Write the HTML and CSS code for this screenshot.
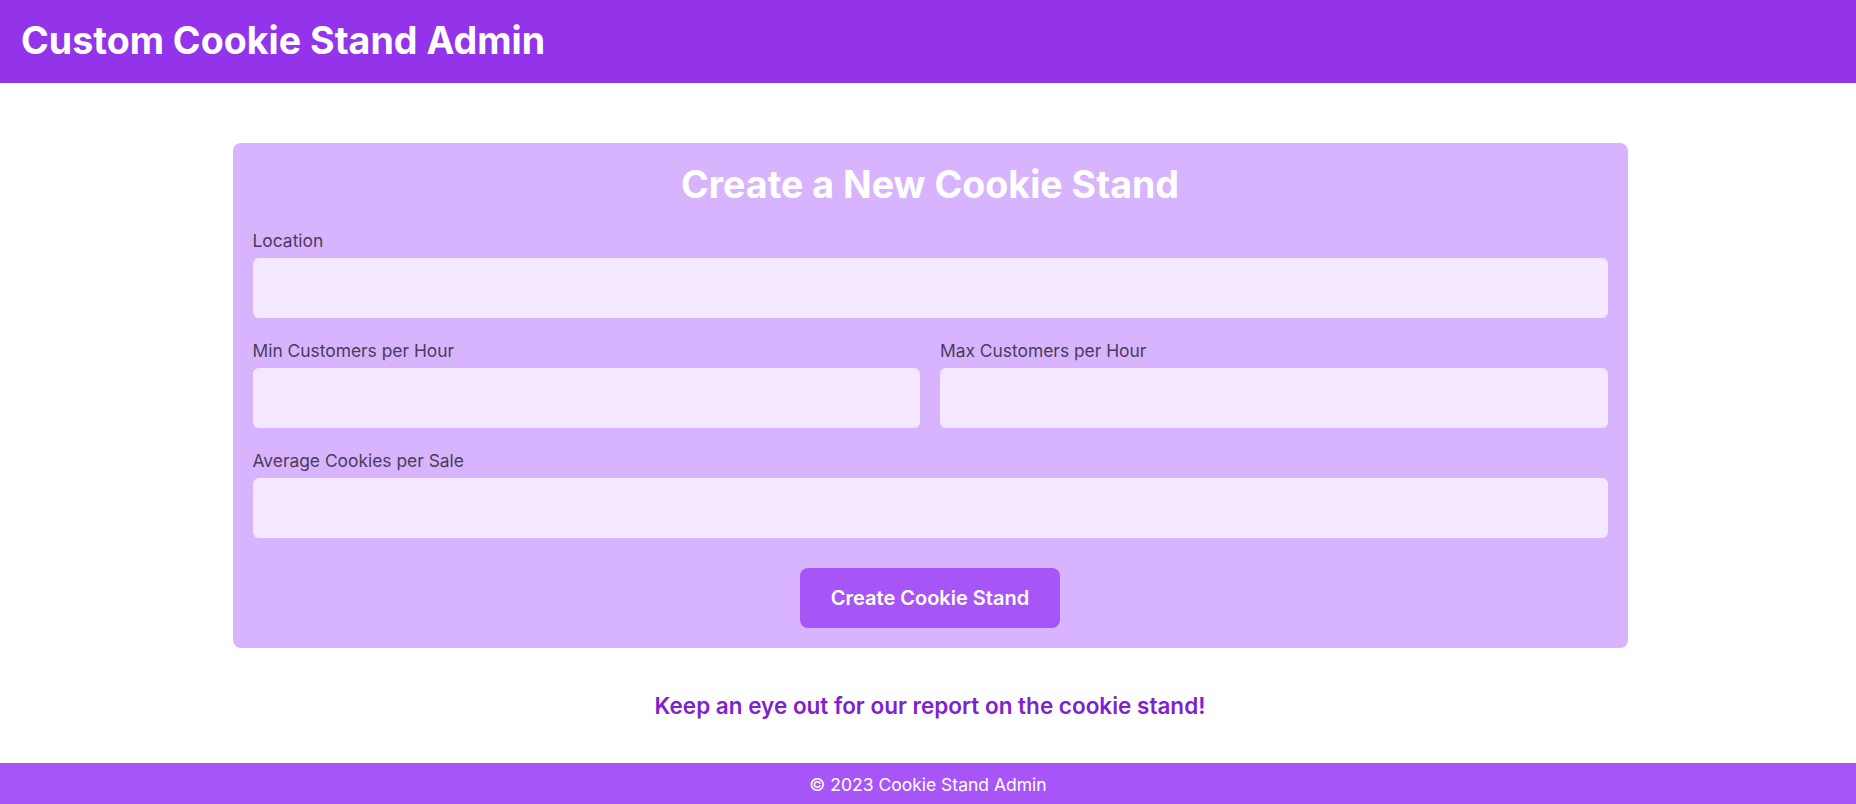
FILE: index.html
```html
<!DOCTYPE html>
<html lang="en">
<head>
<meta charset="utf-8">
<title>Cookie Stand Admin</title>
<link rel="stylesheet" href="styles.css">
</head>
<body>
<header class="site-header">
  <h1 class="site-title">Custom Cookie Stand Admin</h1>
</header>
<main class="main">
  <form class="stand-form">
    <h2 class="form-title">Create a New Cookie Stand</h2>
    <div class="field">
      <label class="field-label" for="location">Location</label>
      <input class="field-input" id="location" type="text">
    </div>
    <div class="field-row">
      <div class="field">
        <label class="field-label" for="min">Min Customers per Hour</label>
        <input class="field-input" id="min" type="text">
      </div>
      <div class="field">
        <label class="field-label" for="max">Max Customers per Hour</label>
        <input class="field-input" id="max" type="text">
      </div>
    </div>
    <div class="field">
      <label class="field-label" for="avg">Average Cookies per Sale</label>
      <input class="field-input" id="avg" type="text">
    </div>
    <div class="actions">
      <button class="submit-btn" type="button">Create Cookie Stand</button>
    </div>
  </form>
  <p class="report-note">Keep an eye out for our report on the cookie stand!</p>
</main>
<footer class="site-footer">© 2023 Cookie Stand Admin</footer>
</body>
</html>
```
FILE: styles.css
```css
* { box-sizing: border-box; }
html, body { height: 100%; }
body {
  margin: 0;
  font-family: Inter, "Noto Sans", sans-serif;
  background: #ffffff;
  display: flex;
  flex-direction: column;
  overflow: hidden;
}
.site-header {
  background: #9333ea;
  height: 83px;
  padding: 21px 21px 0;
  flex: none;
}
.site-title {
  margin: 0;
  color: #ffffff;
  font-size: 37.6px;
  line-height: 40px;
  font-weight: 700;
}
.main {
  flex: 1;
  display: flex;
  flex-direction: column;
  align-items: center;
  padding-left: 4px;
}
.stand-form {
  width: 1395px;
  margin-top: 60px;
  background: #d8b4fe;
  border-radius: 8px;
  padding: 20px;
}
.form-title {
  margin: 2px 0 23px;
  text-align: center;
  color: #ffffff;
  font-size: 37.6px;
  line-height: 40px;
  font-weight: 700;
}
.field {
  display: flex;
  flex-direction: column;
  margin-bottom: 20px;
  flex: 1;
}
.field-row {
  display: flex;
  gap: 20px;
}
.field-label {
  color: #4a3b5e;
  font-size: 17.4px;
  line-height: 26px;
  margin-bottom: 4px;
}
.field-input {
  height: 60px;
  border: none;
  border-radius: 6px;
  background: #f3e8ff;
  font: inherit;
  padding: 0 12px;
}
.actions {
  display: flex;
  justify-content: center;
  margin-top: 30px;
}
.submit-btn {
  width: 260px;
  height: 60px;
  border: none;
  border-radius: 8px;
  background: #a855f7;
  color: #ffffff;
  font-family: inherit;
  font-size: 20px;
  line-height: 28px;
  font-weight: 600;
}
.report-note {
  margin: 42px 0 0;
  color: #7e22ce;
  font-size: 22.5px;
  line-height: 32px;
  font-weight: 600;
}
.site-footer {
  flex: none;
  height: 41px;
  background: #a855f7;
  color: #ffffff;
  text-align: center;
  font-size: 17.5px;
  line-height: 28px;
  padding-top: 8px;
}
```
